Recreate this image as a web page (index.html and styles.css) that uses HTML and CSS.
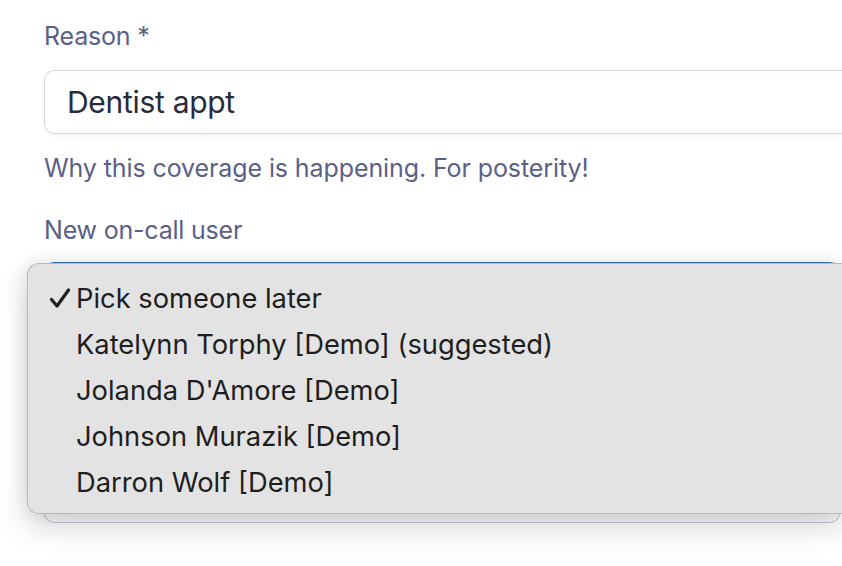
FILE: index.html
```html
<!DOCTYPE html>
<html>
<head>
<meta charset="utf-8">
<link rel="stylesheet" href="styles.css">
</head>
<body>
<div class="form">
  <div class="field">
    <div class="label">Reason *</div>
    <div class="input">Dentist appt</div>
    <div class="help">Why this coverage is happening. For posterity!</div>
  </div>
  <div class="field field-user">
    <div class="label">New on-call user</div>
    <div class="select"></div>
  </div>
</div>
<div class="menu">
  <div class="opt"><svg class="check" width="22" height="22" viewBox="0 0 22 22"><path d="M2.5 11.5 L8 18 L19.5 2" fill="none" stroke="#1f1f1f" stroke-width="3.2" stroke-linecap="round" stroke-linejoin="round"/></svg>Pick someone later</div>
  <div class="opt">Katelynn Torphy [Demo] (suggested)</div>
  <div class="opt">Jolanda D'Amore [Demo]</div>
  <div class="opt">Johnson Murazik [Demo]</div>
  <div class="opt">Darron Wolf [Demo]</div>
</div>
</body>
</html>
```
FILE: styles.css
```css
html, body {
  margin: 0;
  padding: 0;
  background: #ffffff;
  overflow: hidden;
}
body {
  width: 842px;
  height: 566px;
  position: relative;
}
.form {
  padding: 18px 0 0 44px;
  font-family: "Inter", "Noto Sans", sans-serif;
}
.label {
  font-size: 25px;
  line-height: 36px;
  color: #5b5f88;
  letter-spacing: -0.2px;
}
.input {
  margin-top: 16px;
  width: 775px;
  height: 62px;
  box-sizing: content-box;
  border: 1px solid #d8d6e6;
  border-right: none;
  border-radius: 10px 0 0 10px;
  padding: 0 0 0 22px;
  font-size: 30px;
  line-height: 62px;
  color: #272a3c;
  letter-spacing: -0.3px;
  box-shadow: 0 2px 4px rgba(60, 60, 100, 0.06);
}
.help {
  margin-top: 16px;
  font-size: 25px;
  line-height: 36px;
  color: #5b5f88;
  letter-spacing: -0.1px;
}
.field-user {
  margin-top: 26px;
}
.field-user .select {
  margin-top: 14px;
  width: 794px;
  height: 258px;
  border: 1px solid #c9c6dc;
  border-top: 2px solid #3a72b4;
  border-radius: 10px;
  box-sizing: content-box;
}
.menu {
  position: absolute;
  left: 27px;
  top: 263px;
  width: 815px;
  height: 251px;
  box-sizing: border-box;
  padding: 12px 0 9px 0;
  background: #e3e3e3;
  border: 1px solid #b9b9b9;
  border-right: none;
  border-radius: 12px 0 0 12px;
  box-shadow: 0 12px 30px rgba(0, 0, 0, 0.18), 0 0 16px rgba(0, 0, 0, 0.08);
  font-family: "Inter", "Liberation Sans", sans-serif;
}
.opt {
  position: relative;
  height: 46px;
  line-height: 46px;
  padding-left: 48px;
  font-size: 27.3px;
  color: #1e1e1e;
}
.check {
  position: absolute;
  left: 21px;
  top: 12px;
}
```
